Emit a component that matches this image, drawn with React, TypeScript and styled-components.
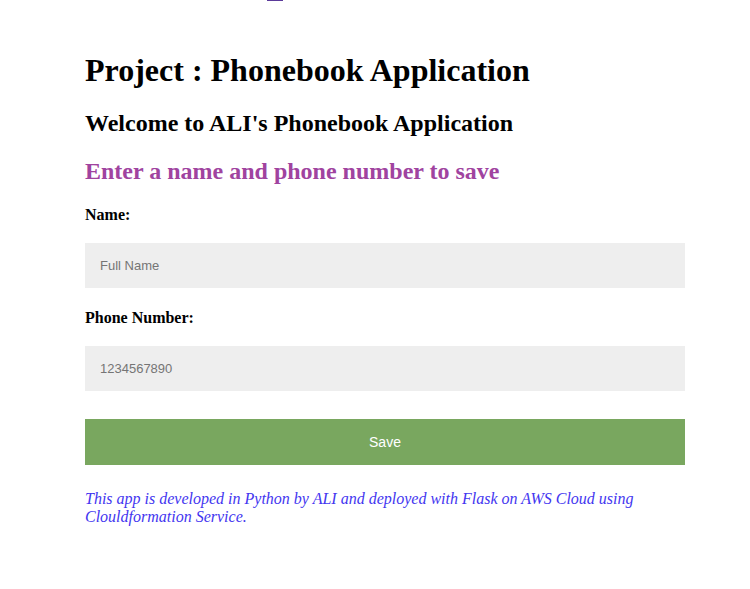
import React from "react";
import styled, { createGlobalStyle } from "styled-components";

const Global = createGlobalStyle`
  html, body {
    margin: 0;
    padding: 0;
    background: #ffffff;
  }
  body {
    font-family: "Liberation Serif", "Times New Roman", serif;
    color: #000000;
  }
`;

const Page = styled.div`
  display: flex;
  flex-direction: column;
  padding-left: 85px;
  width: 600px;
`;

const TopMark = styled.div`
  width: 16px;
  height: 1px;
  margin-left: 182px;
  background: #5b3a9a;
`;

const Title = styled.h1`
  margin: 51px 0 0 0;
  font-size: 32px;
  line-height: 36px;
  font-weight: bold;
`;

const Welcome = styled.h2`
  margin: 21px 0 0 0;
  font-size: 24px;
  line-height: 28px;
  font-weight: bold;
`;

const Prompt = styled.h3`
  margin: 20px 0 0 0;
  font-size: 24px;
  line-height: 28px;
  font-weight: bold;
  color: #a0439f;
`;

const Form = styled.form`
  display: flex;
  flex-direction: column;
  margin: 0;
`;

const Label = styled.label<{ $top: number }>`
  display: block;
  margin-top: ${(p) => p.$top}px;
  font-size: 16px;
  line-height: 18px;
  font-weight: bold;
`;

const Field = styled.input`
  box-sizing: border-box;
  margin-top: 19px;
  width: 600px;
  height: 45px;
  padding: 0 15px;
  border: none;
  outline: none;
  background: #eeeeee;
  font-family: "Liberation Sans", Arial, sans-serif;
  font-size: 13px;
  color: #333333;
  &::placeholder {
    color: #757575;
  }
`;

const SaveButton = styled.button`
  margin-top: 28px;
  width: 600px;
  height: 46px;
  border: none;
  background: #79a75f;
  color: #ffffff;
  font-family: "Liberation Sans", Arial, sans-serif;
  font-size: 14px;
  cursor: pointer;
`;

const Footer = styled.p`
  margin: 25px 0 0 0;
  font-size: 16px;
  line-height: 18px;
  font-style: italic;
  color: #4336f0;
`;

export default function App() {
  return (
    <>
      <Global />
      <Page>
        <TopMark />
        <Title>Project : Phonebook Application</Title>
        <Welcome>Welcome to ALI's Phonebook Application</Welcome>
        <Prompt>Enter a name and phone number to save</Prompt>
        <Form onSubmit={(e) => e.preventDefault()}>
          <Label $top={21} htmlFor="name">Name:</Label>
          <Field id="name" type="text" placeholder="Full Name" />
          <Label $top={21} htmlFor="phone">Phone Number:</Label>
          <Field id="phone" type="text" placeholder="1234567890" />
          <SaveButton type="submit">Save</SaveButton>
        </Form>
        <Footer>
          This app is developed in Python by ALI and deployed with Flask on AWS Cloud using
          Clouldformation Service.
        </Footer>
      </Page>
    </>
  );
}
